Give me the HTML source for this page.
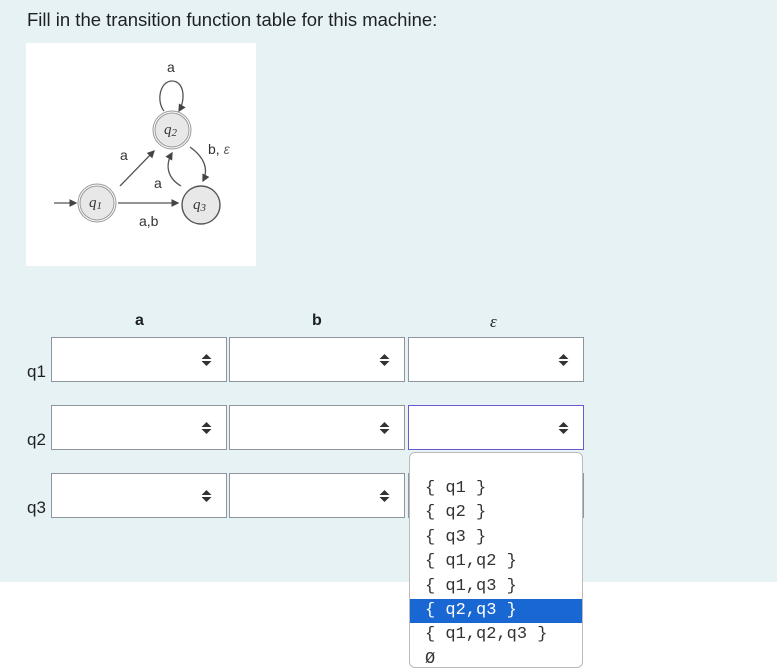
<!DOCTYPE html>
<html><head><style>
*{margin:0;padding:0;box-sizing:border-box}
body{width:777px;height:671px;background:#fff;font-family:"Liberation Sans",sans-serif;position:relative;overflow:hidden}
.bg{position:absolute;left:0;top:0;width:777px;height:582px;background:#e7f2f4}
.t{position:absolute;left:27px;top:9px;font-size:18.5px;color:#1d2125}
.img{position:absolute;left:26px;top:43px;width:230px;height:223px;background:#fff}
.sel{position:absolute;width:176px;height:45px;background:#fff;border:1px solid #8f959e}
.sel svg{position:absolute;right:14px;top:15px}
.h{position:absolute;top:312px;font-size:16px;font-weight:bold;color:#1d2125}
.r{position:absolute;left:27px;font-size:17px;color:#1d2125}
.dd{position:absolute;left:409px;top:452px;width:174px;height:216px;background:#fff;border:1px solid #bbb;border-radius:6px;font-family:"Liberation Mono",monospace;font-size:17px;color:#333}
.dd div{height:24.4px;line-height:24.4px;padding-left:15px;white-space:pre}
.dd .hi{background:#1967d2;color:#fff}
</style></head><body>
<div class="bg"></div>
<div class="t">Fill in the transition function table for this machine:</div>
<div class="img">
<svg width="230" height="223" font-family="Liberation Sans" font-size="14">
<defs><marker id="m" markerWidth="6" markerHeight="6" refX="5" refY="3" orient="auto"><path d="M0,0L6,3L0,6z" fill="#444"/></marker></defs>
<g stroke="#555" fill="none" stroke-width="1.3">
<line x1="28" y1="160" x2="50" y2="160" marker-end="url(#m)"/>
<line x1="92" y1="160" x2="152" y2="160" marker-end="url(#m)"/>
<line x1="94" y1="143" x2="128" y2="108" marker-end="url(#m)"/>
<path d="M138,68 C130,58 134,38 146,38 C158,38 160,56 153,68" marker-end="url(#m)"/>
<path d="M164,104 C178,114 183,126 177,138" marker-end="url(#m)"/>
<path d="M155,143 C143,136 138,124 146,110" marker-end="url(#m)"/>
</g>
<circle cx="71" cy="160" r="18" fill="#e8e8e8" stroke="#999" stroke-width="3"/>
<circle cx="71" cy="160" r="18" fill="none" stroke="#fff" stroke-width="1"/>
<circle cx="146" cy="87" r="18" fill="#e8e8e8" stroke="#999" stroke-width="3"/>
<circle cx="146" cy="87" r="18" fill="none" stroke="#fff" stroke-width="1"/>
<circle cx="175" cy="162" r="19" fill="#e8e8e8" stroke="#555" stroke-width="1.4"/>
<g fill="#333" font-style="italic" font-family="Liberation Serif" font-size="15">
<text x="63" y="164">q<tspan font-size="11" dy="2">1</tspan></text>
<text x="138" y="91">q<tspan font-size="11" dy="2">2</tspan></text>
<text x="167" y="166">q<tspan font-size="11" dy="2">3</tspan></text>
</g>
<g fill="#333">
<text x="141" y="29">a</text><text x="94" y="117">a</text><text x="128" y="145">a</text>
<text x="113" y="183">a,b</text><text x="182" y="111">b, <tspan fill="#666" font-style="italic">ε</tspan></text>
</g></svg></div>
<div class="h" style="left:135px">a</div>
<div class="h" style="left:312px">b</div>
<div class="h" style="left:490px;font-weight:normal;font-style:italic;font-family:'Liberation Serif',serif;font-size:17px">ε</div>
<div class="r" style="top:362px">q1</div>
<div class="r" style="top:430px">q2</div>
<div class="r" style="top:498px">q3</div>
<div class="sel" style="left:51px;top:337px"><svg width="11" height="14"><path d="M0.5,6L5.5,1L10.5,6z M0.5,8L5.5,13L10.5,8z" fill="#333"/></svg></div>
<div class="sel" style="left:229px;top:337px"><svg width="11" height="14"><path d="M0.5,6L5.5,1L10.5,6z M0.5,8L5.5,13L10.5,8z" fill="#333"/></svg></div>
<div class="sel" style="left:408px;top:337px"><svg width="11" height="14"><path d="M0.5,6L5.5,1L10.5,6z M0.5,8L5.5,13L10.5,8z" fill="#333"/></svg></div>
<div class="sel" style="left:51px;top:405px"><svg width="11" height="14"><path d="M0.5,6L5.5,1L10.5,6z M0.5,8L5.5,13L10.5,8z" fill="#333"/></svg></div>
<div class="sel" style="left:229px;top:405px"><svg width="11" height="14"><path d="M0.5,6L5.5,1L10.5,6z M0.5,8L5.5,13L10.5,8z" fill="#333"/></svg></div>
<div class="sel" style="left:408px;top:405px;border-color:#6a5acd"><svg width="11" height="14"><path d="M0.5,6L5.5,1L10.5,6z M0.5,8L5.5,13L10.5,8z" fill="#333"/></svg></div>
<div class="sel" style="left:51px;top:473px"><svg width="11" height="14"><path d="M0.5,6L5.5,1L10.5,6z M0.5,8L5.5,13L10.5,8z" fill="#333"/></svg></div>
<div class="sel" style="left:229px;top:473px"><svg width="11" height="14"><path d="M0.5,6L5.5,1L10.5,6z M0.5,8L5.5,13L10.5,8z" fill="#333"/></svg></div>
<div class="sel" style="left:408px;top:473px"></div>
<div class="dd">
<div style="height:24px"></div>
<div>{ q1 }</div><div>{ q2 }</div><div>{ q3 }</div><div>{ q1,q2 }</div><div>{ q1,q3 }</div>
<div class="hi">{ q2,q3 }</div><div>{ q1,q2,q3 }</div><div>Ø</div>
</div>
</body></html>
